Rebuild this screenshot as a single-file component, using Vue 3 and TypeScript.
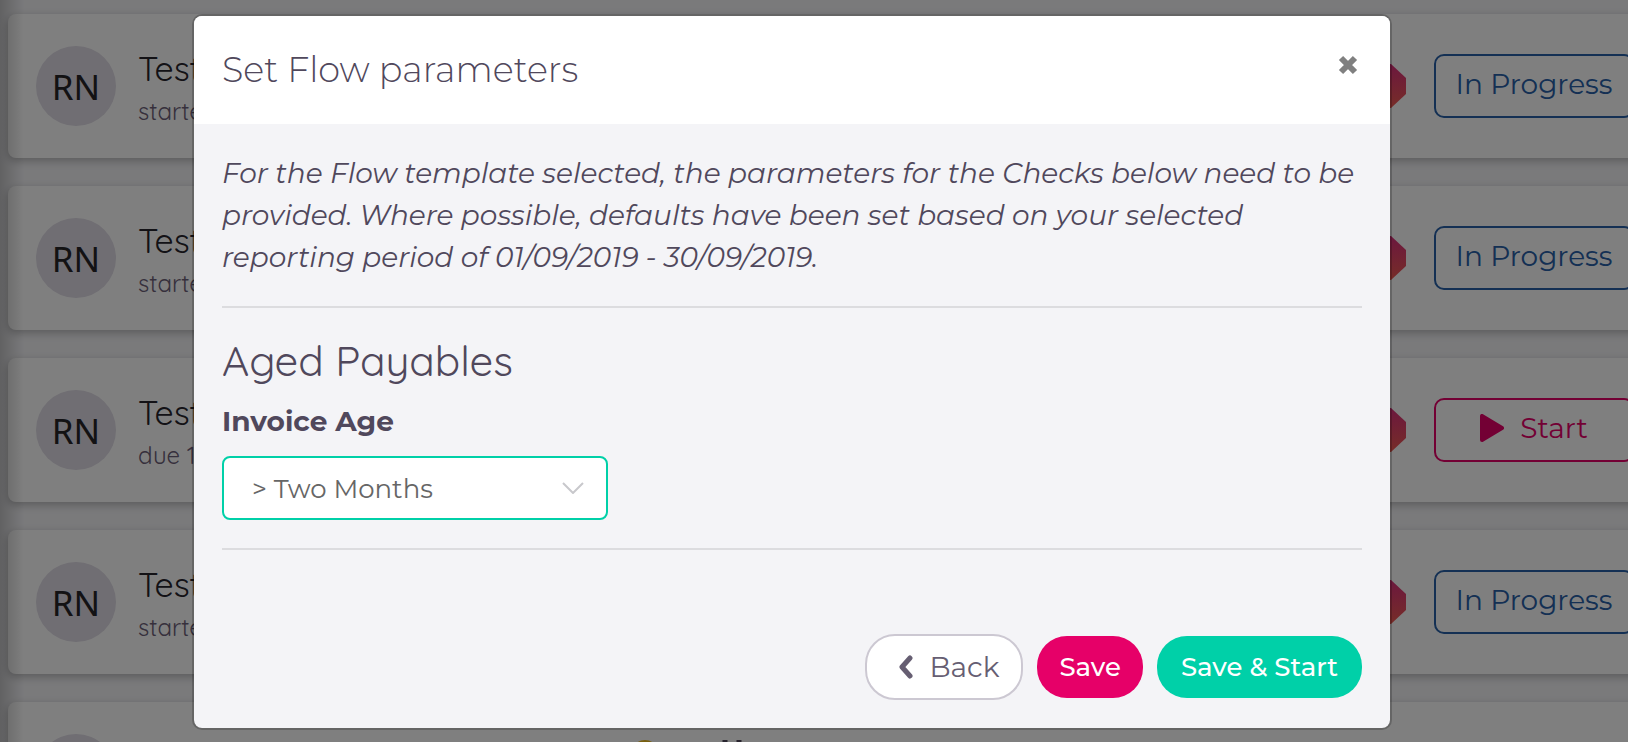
<script setup lang="ts">
import { ref } from 'vue'

interface Flow {
  id: number
  meta: string
  state: 'progress' | 'start'
  flagged?: boolean
}

const flows: Flow[] = [
  { id: 1, meta: 'started', state: 'progress' },
  { id: 2, meta: 'started', state: 'progress' },
  { id: 3, meta: 'due 1', state: 'start' },
  { id: 4, meta: 'started', state: 'progress' },
  { id: 5, meta: 'started', state: 'progress', flagged: true },
]

const ages = ['> Two Months', '> One Month', '> Three Months']
const invoiceAge = ref(ages[0])
</script>

<template>
  <div class="page">
    <ul class="flows">
      <li v-for="flow in flows" :key="flow.id" class="card">
        <span class="avatar">RN</span>
        <div class="summary">
          <span class="name">Test</span>
          <span class="meta">{{ flow.meta }}</span>
        </div>
        <svg v-if="flow.flagged" class="flag" viewBox="0 0 112 64" aria-hidden="true">
          <circle cx="14" cy="36" r="14" fill="#f0c020" />
          <path d="M94 22v20M108 22v20" stroke="#50485c" stroke-width="5" />
        </svg>
        <svg class="step" viewBox="0 0 44 44" aria-hidden="true">
          <defs>
            <linearGradient :id="`step-${flow.id}`" x1="0" y1="0" x2="0" y2="1">
              <stop offset="0" stop-color="#d8307c" />
              <stop offset="1" stop-color="#ee5a50" />
            </linearGradient>
          </defs>
          <path d="M15 0h14L44 14v16L29 44H15L0 30V14Z" :fill="`url(#step-${flow.id})`" />
        </svg>
        <button type="button" class="action" :class="flow.state">
          <svg v-if="flow.state === 'start'" class="play" viewBox="0 0 24 28" aria-hidden="true">
            <path d="M2 2v24L22 14Z" fill="currentColor" stroke="currentColor" stroke-width="4" stroke-linejoin="round" />
          </svg>
          {{ flow.state === 'start' ? 'Start' : 'In Progress' }}
        </button>
      </li>
    </ul>

    <div class="overlay">
      <section class="modal" role="dialog" aria-modal="true" aria-labelledby="modal-title">
        <header class="head">
          <h1 id="modal-title">Set Flow parameters</h1>
          <button type="button" class="close" aria-label="Close">
            <svg viewBox="0 0 20 20" aria-hidden="true">
              <path d="M3 3l14 14M17 3L3 17" stroke="currentColor" stroke-width="6" />
            </svg>
          </button>
        </header>
        <div class="body">
          <p class="intro">
            For the Flow template selected, the parameters for the Checks below need to be provided. Where possible,
            defaults have been set based on your selected reporting period of 01/09/2019 - 30/09/2019.
          </p>
          <hr />
          <h2>Aged Payables</h2>
          <label for="invoice-age">Invoice Age</label>
          <div class="picker">
            <select id="invoice-age" v-model="invoiceAge">
              <option v-for="age in ages" :key="age">{{ age }}</option>
            </select>
            <svg class="caret" viewBox="0 0 22 12" aria-hidden="true">
              <path d="M1 1l10 10L21 1" fill="none" stroke="#c8c8cc" stroke-width="2" />
            </svg>
          </div>
          <hr />
          <footer class="foot">
            <button type="button" class="pill back">
              <svg viewBox="0 0 14 24" aria-hidden="true">
                <path d="M11 3L3 12l8 9" fill="none" stroke="currentColor" stroke-width="5" stroke-linecap="round" stroke-linejoin="round" />
              </svg>
              Back
            </button>
            <button type="button" class="pill save">Save</button>
            <button type="button" class="pill go">Save &amp; Start</button>
          </footer>
        </div>
      </section>
    </div>
  </div>
</template>

<style>
body {
  margin: 0;
}
</style>

<style scoped>
.page {
  position: relative;
  height: 100vh;
  overflow: hidden;
  background: #f4f4f7;
  color: #50485c;
  font-family: Montserrat, Inter, sans-serif;
}
.page * {
  box-sizing: border-box;
}
button,
select {
  font-family: inherit;
  cursor: pointer;
}
.flows {
  display: flex;
  flex-direction: column;
  gap: 28px;
  width: calc(100% + 34px);
  margin: 0;
  padding: 14px 0 0 8px;
  list-style: none;
}
.card {
  display: flex;
  flex: none;
  align-items: center;
  height: 144px;
  padding: 0 28px;
  border-radius: 8px;
  background: #fff;
  box-shadow: 0 3px 8px rgba(0, 0, 0, 0.25);
}
.page::before {
  content: '';
  position: absolute;
  z-index: 1;
  inset: 0 auto 0 0;
  width: 24px;
  background: linear-gradient(90deg, rgba(0, 0, 0, 0.2), rgba(0, 0, 0, 0));
}
.avatar {
  display: grid;
  place-items: center;
  width: 80px;
  height: 80px;
  border-radius: 50%;
  background: #e0dce6;
  color: #262428;
  font: 35px 'Noto Sans', 'Open Sans', sans-serif;
}
.summary {
  display: flex;
  flex-direction: column;
  width: 240px;
  padding: 8px 0 0 22px;
  font-family: Quicksand, Lato, sans-serif;
  line-height: 42px;
}
.name {
  color: #26242c;
  font-size: 34px;
}
.meta {
  color: #6c6078;
  font-size: 24px;
}
.flag {
  align-self: flex-end;
  width: 112px;
  height: 64px;
  margin: 0 0 64px 275px;
}
.step {
  width: 44px;
  height: 44px;
  margin: 0 28px 0 auto;
}
.action {
  display: flex;
  align-items: center;
  justify-content: center;
  gap: 16px;
  width: 200px;
  height: 64px;
  padding: 0 0 4px;
  border: 2px solid currentColor;
  border-radius: 10px;
  background: none;
  font-size: 28px;
}
.progress {
  color: #2860a8;
}
.start {
  color: #e60068;
}
.play {
  width: 24px;
  height: 28px;
}
.overlay {
  position: absolute;
  z-index: 2;
  inset: 0;
  padding: 14px 44px 12px 0;
  background: rgba(0, 0, 0, 0.5);
}
.modal {
  width: calc(100% - 56px);
  max-width: 1200px;
  margin: 0 auto;
  border: 2px solid rgba(0, 0, 0, 0.2);
  border-radius: 10px;
  background: #f4f4f7;
  background-clip: padding-box;
}
.head {
  display: flex;
  align-items: flex-start;
  justify-content: space-between;
  padding: 28px;
  border-radius: 8px 8px 0 0;
  background: #fff;
}
h1 {
  margin: 0;
  font-size: 35px;
  font-weight: 300;
  line-height: 52px;
}
.close {
  display: grid;
  place-items: center;
  width: 28px;
  height: 42px;
  padding: 0;
  border: 0;
  background: none;
  color: #808080;
}
.close svg {
  width: 20px;
  height: 20px;
}
.body {
  padding: 28px;
}
.intro {
  margin: 0;
  font-size: 28px;
  font-style: italic;
  line-height: 42px;
}
hr {
  height: 2px;
  margin: 28px 0;
  border: 0;
  background: #dcdcdf;
}
h2 {
  margin: 0 0 14px;
  font: 400 42px/50px Quicksand, Lato, sans-serif;
}
label {
  display: block;
  margin-bottom: 14px;
  font-size: 28px;
  font-weight: 700;
  line-height: 42px;
}
.picker {
  position: relative;
  width: 386px;
}
select {
  display: block;
  width: 100%;
  height: 64px;
  padding: 2px 60px 0 28px;
  appearance: none;
  border: 2px solid #00d0a8;
  border-radius: 8px;
  background: #fff;
  color: #666;
  font-size: 26px;
}
.caret {
  position: absolute;
  top: 26px;
  right: 24px;
  width: 22px;
  height: 12px;
  pointer-events: none;
}
.foot {
  display: flex;
  align-items: center;
  justify-content: flex-end;
  gap: 14px;
  padding-top: 56px;
}
.pill {
  height: 62px;
  padding: 0 22px;
  border: 0;
  border-radius: 30px;
  color: #fff;
  font-size: 26px;
  font-weight: 500;
}
.back {
  display: flex;
  align-items: center;
  gap: 16px;
  height: 66px;
  padding: 0 22px 0 32px;
  border: 2px solid #ccc8d2;
  background: #fff;
  color: #665e72;
  font-size: 28px;
  font-weight: 400;
}
.back svg {
  width: 14px;
  height: 24px;
}
.save {
  background: #e60068;
}
.go {
  padding: 0 24px;
  background: #00d0a8;
}
</style>
